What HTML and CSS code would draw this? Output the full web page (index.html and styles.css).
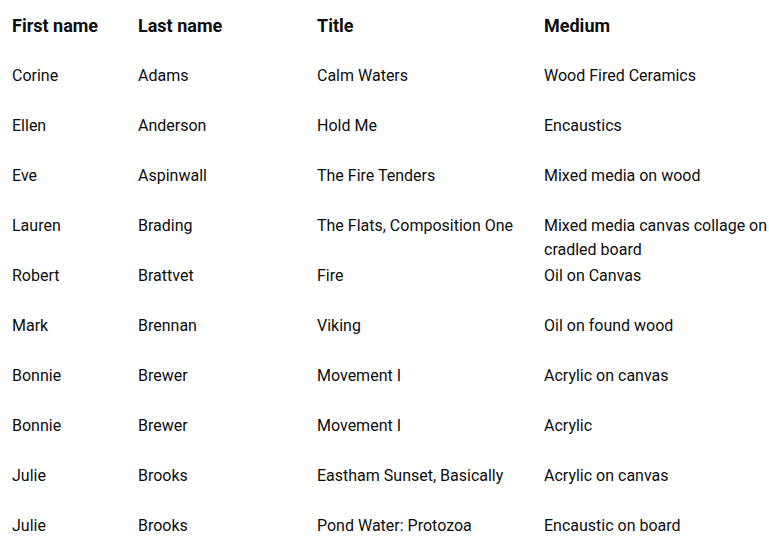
FILE: index.html
```html
<!DOCTYPE html>
<html>
<head>
<meta charset="utf-8">
<link rel="stylesheet" href="styles.css">
</head>
<body>
<div class="table">
  <div class="row head">
    <div class="cell">First name</div><div class="cell">Last name</div><div class="cell">Title</div><div class="cell">Medium</div>
  </div>
  <div class="row"><div class="cell">Corine</div><div class="cell">Adams</div><div class="cell">Calm Waters</div><div class="cell">Wood Fired Ceramics</div></div>
  <div class="row"><div class="cell">Ellen</div><div class="cell">Anderson</div><div class="cell">Hold Me</div><div class="cell">Encaustics</div></div>
  <div class="row"><div class="cell">Eve</div><div class="cell">Aspinwall</div><div class="cell">The Fire Tenders</div><div class="cell">Mixed media on wood</div></div>
  <div class="row"><div class="cell">Lauren</div><div class="cell">Brading</div><div class="cell">The Flats, Composition One</div><div class="cell">Mixed media canvas collage on cradled board</div></div>
  <div class="row"><div class="cell">Robert</div><div class="cell">Brattvet</div><div class="cell">Fire</div><div class="cell">Oil on Canvas</div></div>
  <div class="row"><div class="cell">Mark</div><div class="cell">Brennan</div><div class="cell">Viking</div><div class="cell">Oil on found wood</div></div>
  <div class="row"><div class="cell">Bonnie</div><div class="cell">Brewer</div><div class="cell">Movement I</div><div class="cell">Acrylic on canvas</div></div>
  <div class="row"><div class="cell">Bonnie</div><div class="cell">Brewer</div><div class="cell">Movement I</div><div class="cell">Acrylic</div></div>
  <div class="row"><div class="cell">Julie</div><div class="cell">Brooks</div><div class="cell">Eastham Sunset, Basically</div><div class="cell">Acrylic on canvas</div></div>
  <div class="row"><div class="cell">Julie</div><div class="cell">Brooks</div><div class="cell">Pond Water: Protozoa</div><div class="cell">Encaustic on board</div></div>
</div>
</body>
</html>
```
FILE: styles.css
```css
html, body {
  margin: 0;
  padding: 0;
  background: #ffffff;
}
body {
  font-family: Roboto, "Noto Sans", sans-serif;
  font-size: 16px;
  color: #0d0d0d;
  overflow: hidden;
}
.table {
  display: flex;
  flex-direction: column;
  padding-left: 12px;
}
.row {
  display: grid;
  grid-template-columns: 126px 179px 227px 226px;
  height: 50px;
  padding-top: 14.5px;
  box-sizing: border-box;
  line-height: 24px;
}
.row.head {
  height: 49px;
  padding-top: 14px;
  font-weight: 700;
  font-size: 18px;
}
.cell {
  white-space: normal;
}
```
